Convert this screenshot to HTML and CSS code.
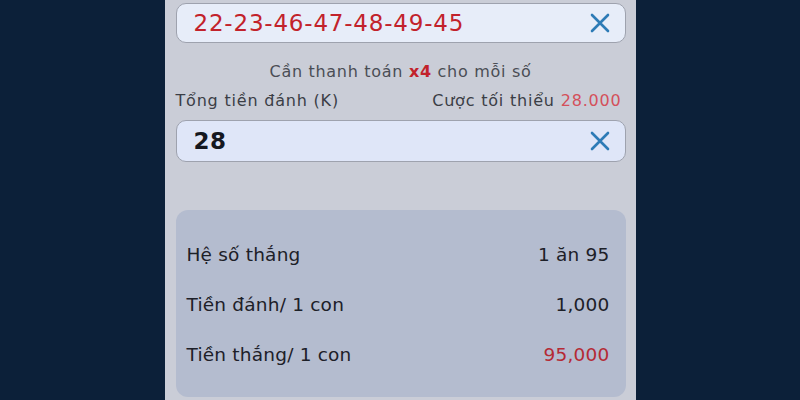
FILE: index.html
```html
<!DOCTYPE html>
<html lang="vi">
<head>
<meta charset="utf-8">
<link rel="stylesheet" href="styles.css">
</head>
<body>
<div class="panel">
  <div class="field field-top">
    <span class="field-value red">22-23-46-47-48-49-45</span>
    <svg class="clear" viewBox="0 0 20 20" width="20" height="20"><path d="M2 2 L18 18 M18 2 L2 18" stroke="#2d7bb6" stroke-width="2.6" stroke-linecap="round" fill="none"/></svg>
  </div>
  <div class="hint">Cần thanh toán <b class="red">x4</b> cho mỗi số</div>
  <div class="labels">
    <span>Tổng tiền đánh (K)</span>
    <span>Cược tối thiểu <span class="pink">28.000</span></span>
  </div>
  <div class="field field-amount">
    <span class="field-value dark">28</span>
    <svg class="clear" viewBox="0 0 20 20" width="20" height="20"><path d="M2 2 L18 18 M18 2 L2 18" stroke="#2d7bb6" stroke-width="2.6" stroke-linecap="round" fill="none"/></svg>
  </div>
  <div class="summary">
    <div class="row"><span>Hệ số thắng</span><span>1 ăn 95</span></div>
    <div class="row"><span>Tiền đánh/ 1 con</span><span>1,000</span></div>
    <div class="row"><span>Tiền thắng/ 1 con</span><span class="win">95,000</span></div>
  </div>
</div>
</body>
</html>
```
FILE: styles.css
```css
html, body {
  margin: 0;
  padding: 0;
  height: 100%;
  background: #0c2039;
  overflow: hidden;
}
body {
  font-family: "DejaVu Sans", "Noto Sans", sans-serif;
}
.panel {
  width: 450px;
  height: 400px;
  margin: 0 auto;
  padding: 3px 10px 0 11px;
  box-sizing: content-box;
  background: #cacdd7;
  display: flex;
  flex-direction: column;
}
.field {
  height: 38px;
  flex: none;
  border: 1px solid #9ea2ae;
  border-radius: 10px;
  background: #e7edf9;
  display: flex;
  align-items: center;
  justify-content: space-between;
  padding: 0 15px 0 17px;
}
.field-amount {
  height: 40px;
  background: #dfe6f8;
}
.field-value {
  font-size: 23px;
  letter-spacing: 0.8px;
}
.red { color: #c2222b; }
.dark { color: #15181f; font-weight: 600; letter-spacing: 0.5px; }
.clear { display: block; }
.hint {
  margin-top: 19px;
  text-align: center;
  font-size: 16px;
  letter-spacing: 0.7px;
  color: #4a4d55;
  line-height: 20px;
}
.hint b { font-weight: bold; }
.labels {
  margin-top: 9px;
  display: flex;
  justify-content: space-between;
  font-size: 16px;
  letter-spacing: 0.8px;
  color: #3b3e46;
  line-height: 20px;
  padding-right: 4px;
}
.pink { color: #d4505b; }
.labels + .field { margin-top: 9px; }
.summary {
  margin-top: 48px;
  background: #b4bccf;
  border-radius: 12px;
  padding: 19px 16px 18px 11px;
}
.row {
  height: 50px;
  display: flex;
  align-items: center;
  justify-content: space-between;
  font-size: 18.5px;
  letter-spacing: 0.2px;
  color: #1d2028;
}
.win { color: #b52a35; }
```
